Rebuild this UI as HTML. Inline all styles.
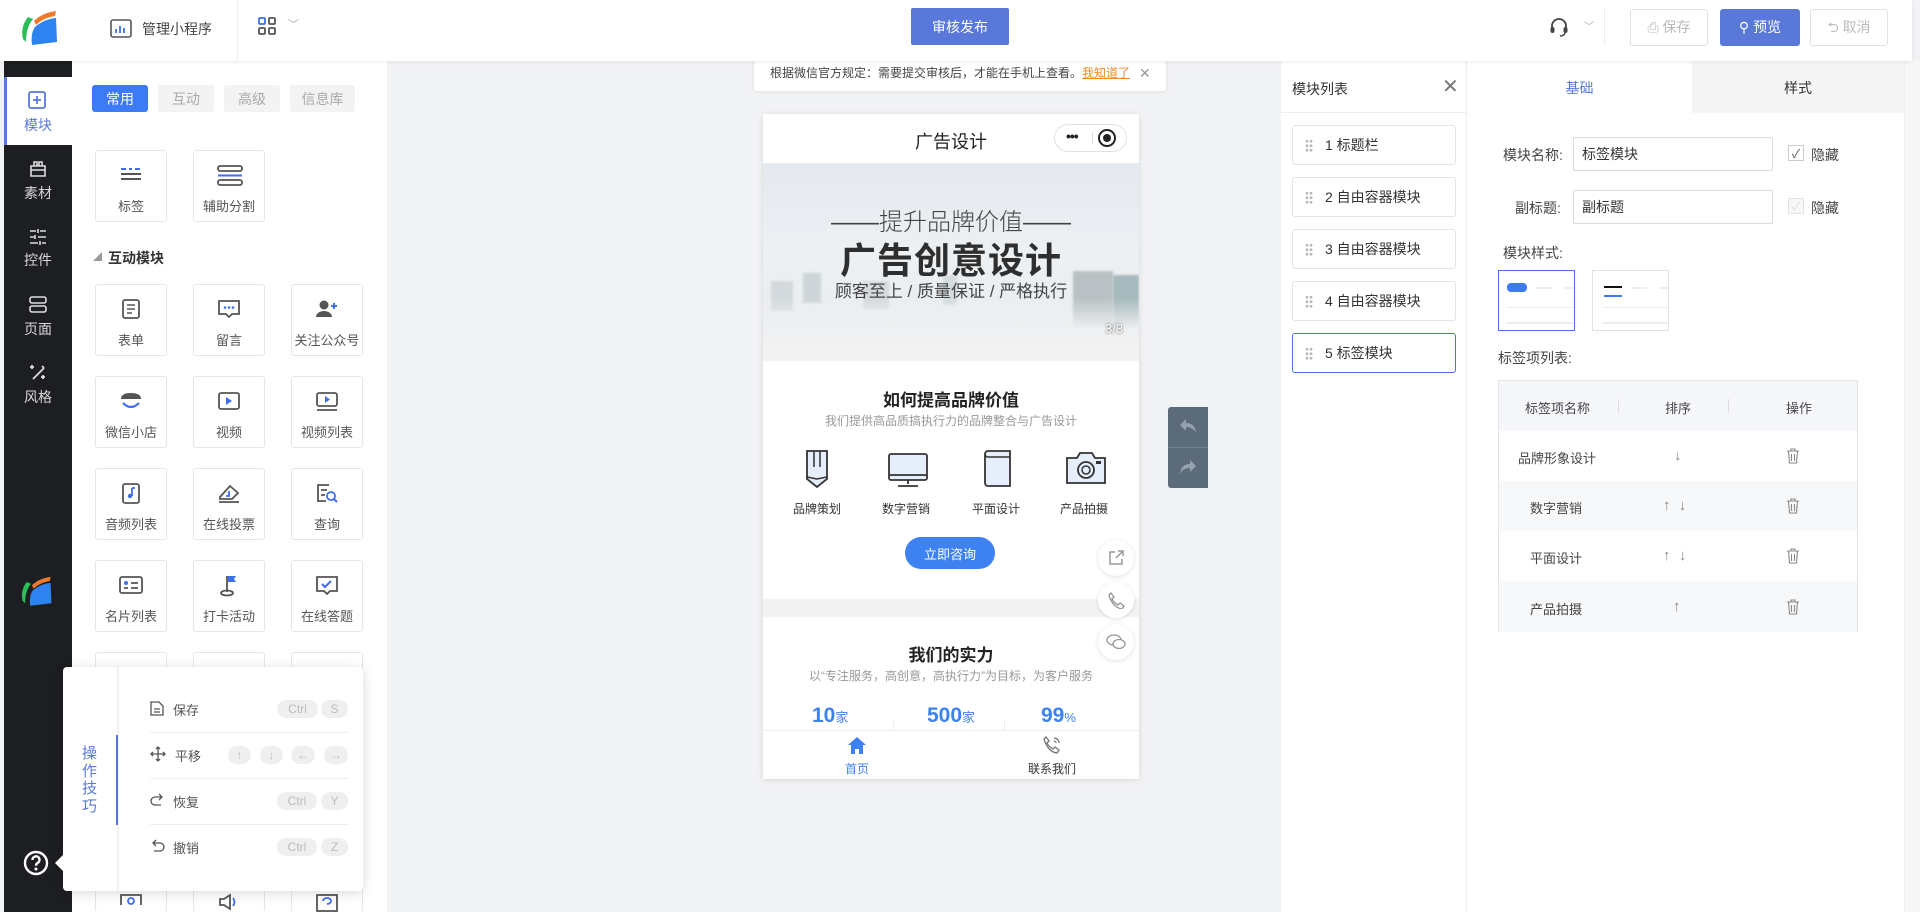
<!DOCTYPE html>
<html style="width:1920px;height:912px;overflow:hidden"><head><meta charset="utf-8"><style>
*{margin:0;padding:0;box-sizing:border-box}
body{width:1920px;height:912px;overflow:hidden;background:#f2f3f5;font-family:"Liberation Sans","Noto Sans CJK SC",sans-serif;color:#333;position:relative;font-size:14px}
.a{position:absolute}
.c{display:flex;align-items:center;justify-content:center}
.card{position:absolute;width:72px;height:72px;border:1px solid #e6e6e6;border-radius:3px;background:#fff;text-align:center;font-size:13px;color:#555;overflow:hidden}
.card svg{position:absolute;left:23px;top:14px}
.card span{position:absolute;left:0;right:0;top:45px;white-space:nowrap}
.sb{position:absolute;left:4px;width:68px;text-align:center;color:#d8d8d8;font-size:14px}
.mi{position:absolute;left:1292px;width:164px;height:40px;border:1px solid #e4e4e4;border-radius:3px;background:#fff;font-size:14px;color:#333;line-height:38px;padding-left:32px}
.mi i{position:absolute;left:12px;top:13px;width:8px;height:13px;background:radial-gradient(circle,#bbb 1.3px,transparent 1.6px) 0 0/4px 4.5px}
.chip{position:absolute;height:18px;border-radius:9px;background:#efefef;color:#bbb;font-size:12px;line-height:18px;text-align:center}
.row{position:absolute;left:150px;width:198px;font-size:13px;color:#555}
.btn{position:absolute;top:9px;height:37px;border:1px solid #e2e2e2;border-radius:3px;font-size:14px;color:#bbb;line-height:35px;text-align:center;background:#fff}
</style></head><body>

<!-- top bar -->
<div class="a" style="left:0;top:0;width:1912px;height:61px;background:#fff;box-shadow:0 1px 4px rgba(0,0,0,.08);z-index:5">
 <svg class="a" style="left:20px;top:9px" width="40" height="36" viewBox="0 0 40 36"><path d="M8 8 C3 14 1 22 3 30 L6 33 C6 24 8 16 13 10Z" fill="#2bbd5a"/><path d="M14 12 C20 6 28 3 36 2 L35 7 C28 8 21 11 16 16Z" fill="#f07a2c"/><path d="M15 18 C22 12 28 10 36 9 L37 33 L12 36 C11 28 12 22 15 18Z" fill="#2d84f0"/></svg>
 <svg class="a" style="left:110px;top:19px" width="22" height="19" viewBox="0 0 22 19"><rect x="1" y="1" width="20" height="17" rx="2" fill="none" stroke="#555" stroke-width="1.6"/><path d="M6 14V10M10 14V7M14 14V9" stroke="#3d6ef0" stroke-width="1.8"/></svg>
 <div class="a" style="left:142px;top:19px;font-size:14px;color:#444">管理小程序</div>
 <div class="a" style="left:237px;top:0;width:1px;height:61px;background:#eee"></div>
 <svg class="a" style="left:258px;top:17px" width="18" height="18" viewBox="0 0 18 18"><rect x="1" y="1" width="6" height="6" rx="1" fill="none" stroke="#3d6ef0" stroke-width="1.8"/><rect x="11" y="1" width="6" height="6" rx="1" fill="none" stroke="#555" stroke-width="1.8"/><rect x="1" y="11" width="6" height="6" rx="1" fill="none" stroke="#555" stroke-width="1.8"/><rect x="11" y="11" width="6" height="6" rx="1" fill="none" stroke="#555" stroke-width="1.8"/></svg>
 <div class="a" style="left:288px;top:16px;color:#aaa;font-size:11px">﹀</div>
 <div class="a c" style="left:911px;top:8px;width:98px;height:37px;background:#5a78d8;color:#fff;font-size:14px;border-radius:2px">审核发布</div>
 <svg class="a" style="left:1549px;top:17px" width="20" height="20" viewBox="0 0 20 20"><path d="M3 12V9a7 7 0 0 1 14 0v3" fill="none" stroke="#444" stroke-width="1.8"/><rect x="1.5" y="10" width="4" height="6" rx="2" fill="#444"/><rect x="14.5" y="10" width="4" height="6" rx="2" fill="#444"/><path d="M16 16q-1 3-5 3" fill="none" stroke="#444" stroke-width="1.5"/></svg>
 <div class="a" style="left:1584px;top:18px;color:#aaa;font-size:10px">﹀</div>
 <div class="a" style="left:1604px;top:8px;width:1px;height:37px;background:#eee"></div>
 <div class="btn" style="left:1630px;width:78px">⎙ 保存</div>
 <div class="btn" style="left:1720px;width:80px;background:#5a78d8;border-color:#5a78d8;color:#fff">⚲ 预览</div>
 <div class="btn" style="left:1810px;width:78px">⮌ 取消</div>
</div>
<div class="a" style="left:1904px;top:61px;width:16px;height:851px;background:#f7f7f7;border-left:1px solid #eee"></div>

<!-- sidebar -->
<div class="a" style="left:4px;top:61px;width:68px;height:851px;background:#1d1e22"></div>
<div class="a" style="left:4px;top:77px;width:68px;height:68px;background:#fff;border-left:3px solid #5a78d8"></div>
<svg class="a" style="left:28px;top:91px" width="18" height="18" viewBox="0 0 18 18"><rect x="1" y="1" width="16" height="16" rx="2" fill="none" stroke="#5a78d8" stroke-width="1.8"/><path d="M9 5v8M5 9h8" stroke="#5a78d8" stroke-width="1.8"/></svg>
<div class="sb" style="top:115px;color:#5a78d8">模块</div>
<svg class="a" style="left:29px;top:160px" width="18" height="17" viewBox="0 0 18 17"><path d="M2 6h14v10H2zM2 10h14M5 6V2h3v4M10 6V2h3v4" fill="none" stroke="#ddd" stroke-width="1.6"/></svg>
<div class="sb" style="top:183px">素材</div>
<svg class="a" style="left:29px;top:228px" width="18" height="17" viewBox="0 0 18 17"><path d="M1 3h6M11 3h6M1 9h4M9 9h8M1 15h8M13 15h4M9 1v4M6 7v4M11 13v4" stroke="#ddd" stroke-width="1.6"/></svg>
<div class="sb" style="top:250px">控件</div>
<svg class="a" style="left:29px;top:296px" width="18" height="17" viewBox="0 0 18 17"><rect x="1" y="1" width="16" height="6" rx="2" fill="none" stroke="#ddd" stroke-width="1.6"/><rect x="1" y="10" width="16" height="6" rx="2" fill="none" stroke="#ddd" stroke-width="1.6"/></svg>
<div class="sb" style="top:319px">页面</div>
<svg class="a" style="left:29px;top:363px" width="18" height="18" viewBox="0 0 18 18"><path d="M4 16L15 5M13 3l2 2M3 2v4M1 4h4M14 12v4M12 14h4" stroke="#ddd" stroke-width="1.8"/></svg>
<div class="sb" style="top:387px">风格</div>
<svg class="a" style="left:20px;top:573px" width="34" height="35" viewBox="0 0 40 36"><path d="M8 8 C3 14 1 22 3 30 L6 33 C6 24 8 16 13 10Z" fill="#2bbd5a"/><path d="M14 12 C20 6 28 3 36 2 L35 7 C28 8 21 11 16 16Z" fill="#f07a2c"/><path d="M15 18 C22 12 28 10 36 9 L37 33 L12 36 C11 28 12 22 15 18Z" fill="#2d84f0"/></svg>
<svg class="a" style="left:23px;top:850px" width="26" height="26" viewBox="0 0 26 26"><circle cx="13" cy="13" r="11" fill="none" stroke="#fff" stroke-width="2.4"/><path d="M9.5 10a3.5 3.5 0 1 1 5 3c-1.2.7-1.5 1.3-1.5 2.8" fill="none" stroke="#fff" stroke-width="2.4"/><circle cx="13" cy="19" r="1.5" fill="#fff"/></svg>

<!-- left panel -->
<div class="a" style="left:72px;top:61px;width:315px;height:851px;background:#fff"></div>
<div class="a c" style="left:92px;top:85px;width:56px;height:27px;background:#3d7af5;color:#fff;border-radius:3px;font-size:14px">常用</div>
<div class="a c" style="left:158px;top:85px;width:56px;height:27px;background:#f3f3f3;color:#aaa;border-radius:3px;font-size:14px">互动</div>
<div class="a c" style="left:224px;top:85px;width:56px;height:27px;background:#f3f3f3;color:#aaa;border-radius:3px;font-size:14px">高级</div>
<div class="a c" style="left:290px;top:85px;width:65px;height:27px;background:#f3f3f3;color:#aaa;border-radius:3px;font-size:14px">信息库</div>

<div class="card" style="left:95px;top:150px"><svg width="24" height="20" viewBox="0 0 24 20"><path d="M2 4h5M10 4h3M16 4h5" stroke="#3d6ef0" stroke-width="2"/><path d="M2 9h20M2 14h20" stroke="#555" stroke-width="2"/></svg><span>标签</span></div>
<div class="card" style="left:193px;top:150px"><svg width="26" height="22" viewBox="0 0 26 22"><rect x="1" y="1" width="24" height="5" rx="2" fill="none" stroke="#555" stroke-width="1.8"/><rect x="1" y="15" width="24" height="5" rx="2" fill="none" stroke="#555" stroke-width="1.8"/><path d="M1 10.5h24" stroke="#3d6ef0" stroke-width="2"/></svg><span>辅助分割</span></div>

<div class="a" style="left:93px;top:250px;font-size:9px;color:#999">◢</div>
<div class="a" style="left:108px;top:248px;font-size:14px;font-weight:bold;color:#333">互动模块</div>

<div class="card" style="left:95px;top:284px"><svg width="24" height="22" viewBox="0 0 24 22"><rect x="4" y="1" width="16" height="18" rx="2" fill="none" stroke="#555" stroke-width="1.8"/><path d="M8 6h8M8 10h8M8 14h5" stroke="#555" stroke-width="1.6"/></svg><span>表单</span></div>
<div class="card" style="left:193px;top:284px"><svg width="24" height="22" viewBox="0 0 24 22"><path d="M2 2h20v13h-7l-3 3-3-3H2z" fill="none" stroke="#555" stroke-width="1.8"/><circle cx="8" cy="8.5" r="1.3" fill="#3d6ef0"/><circle cx="12" cy="8.5" r="1.3" fill="#3d6ef0"/><circle cx="16" cy="8.5" r="1.3" fill="#3d6ef0"/></svg><span>留言</span></div>
<div class="card" style="left:291px;top:284px"><svg width="24" height="22" viewBox="0 0 24 22"><circle cx="9" cy="6" r="4.5" fill="#555"/><path d="M1 18a8 6 0 0 1 16 0z" fill="#555"/><path d="M19 4v6M16 7h6" stroke="#3d6ef0" stroke-width="2"/></svg><span>关注公众号</span></div>

<div class="card" style="left:95px;top:376px"><svg width="24" height="22" viewBox="0 0 24 22"><path d="M2 8q0-6 10-6t10 6z" fill="#555"/><path d="M4 12q8 8 16 0" fill="none" stroke="#3d6ef0" stroke-width="2.2"/></svg><span>微信小店</span></div>
<div class="card" style="left:193px;top:376px"><svg width="24" height="22" viewBox="0 0 24 22"><rect x="2" y="2" width="20" height="16" rx="2" fill="none" stroke="#555" stroke-width="1.8"/><path d="M9 6v8l6-4z" fill="#3d6ef0"/></svg><span>视频</span></div>
<div class="card" style="left:291px;top:376px"><svg width="24" height="22" viewBox="0 0 24 22"><rect x="2" y="2" width="20" height="13" rx="2" fill="none" stroke="#555" stroke-width="1.8"/><path d="M10 5v7l5-3.5z" fill="#3d6ef0"/><path d="M2 19h20" stroke="#555" stroke-width="1.8"/></svg><span>视频列表</span></div>

<div class="card" style="left:95px;top:468px"><svg width="24" height="22" viewBox="0 0 24 22"><rect x="4" y="1" width="16" height="19" rx="2" fill="none" stroke="#555" stroke-width="1.8"/><path d="M13 5v8" stroke="#3d6ef0" stroke-width="1.8"/><circle cx="11" cy="13" r="2.2" fill="#3d6ef0"/><path d="M13 5h3" stroke="#3d6ef0" stroke-width="1.8"/></svg><span>音频列表</span></div>
<div class="card" style="left:193px;top:468px"><svg width="24" height="22" viewBox="0 0 24 22"><path d="M3 14L13 3l8 7-6 6H3z" fill="none" stroke="#555" stroke-width="1.8"/><path d="M2 19h20" stroke="#555" stroke-width="1.8"/><path d="M12 8v5h-3" fill="none" stroke="#3d6ef0" stroke-width="1.8"/></svg><span>在线投票</span></div>
<div class="card" style="left:291px;top:468px"><svg width="24" height="22" viewBox="0 0 24 22"><path d="M14 2H3v16h8M6 7h6M6 12h4" fill="none" stroke="#555" stroke-width="1.8"/><circle cx="16" cy="13" r="4" fill="none" stroke="#3d6ef0" stroke-width="1.8"/><path d="M19 16l3 3" stroke="#3d6ef0" stroke-width="2"/></svg><span>查询</span></div>

<div class="card" style="left:95px;top:560px"><svg width="24" height="22" viewBox="0 0 24 22"><rect x="1" y="2" width="22" height="16" rx="2" fill="none" stroke="#555" stroke-width="1.8"/><circle cx="7" cy="8" r="2" fill="#3d6ef0"/><path d="M5 13h4M12 8h7M12 13h7" stroke="#555" stroke-width="1.8"/></svg><span>名片列表</span></div>
<div class="card" style="left:193px;top:560px"><svg width="24" height="22" viewBox="0 0 24 22"><path d="M10 1v16" stroke="#555" stroke-width="1.8"/><path d="M11 1h8l-2 3 2 3h-8z" fill="#3d6ef0"/><ellipse cx="10" cy="18" rx="6" ry="2.5" fill="none" stroke="#555" stroke-width="1.8"/></svg><span>打卡活动</span></div>
<div class="card" style="left:291px;top:560px"><svg width="24" height="22" viewBox="0 0 24 22"><path d="M2 2h20v14h-7l-3 3-3-3H2z" fill="none" stroke="#555" stroke-width="1.8"/><path d="M7 9l3 3 6-6" fill="none" stroke="#3d6ef0" stroke-width="2"/></svg><span>在线答题</span></div>

<div class="card" style="left:95px;top:652px"></div>
<div class="card" style="left:193px;top:652px"></div>
<div class="card" style="left:291px;top:652px"></div>
<div class="card" style="left:95px;top:885px;height:27px;border-bottom:0"><svg width="24" height="22" viewBox="0 0 24 22" style="top:7px"><path d="M2 12V2h20v10" fill="none" stroke="#555" stroke-width="1.8"/><circle cx="12" cy="8" r="3" fill="none" stroke="#3d6ef0" stroke-width="1.8"/></svg></div>
<div class="card" style="left:193px;top:885px;height:27px;border-bottom:0"><svg width="24" height="22" viewBox="0 0 24 22" style="top:7px"><path d="M3 6h4l6-4v14l-6-4H3z" fill="none" stroke="#555" stroke-width="1.8"/><path d="M16 5q3 4 0 8" fill="none" stroke="#3d6ef0" stroke-width="1.8"/></svg></div>
<div class="card" style="left:291px;top:885px;height:27px;border-bottom:0"><svg width="24" height="22" viewBox="0 0 24 22" style="top:7px"><rect x="2" y="2" width="20" height="16" fill="none" stroke="#555" stroke-width="1.8"/><path d="M8 8a4 3 0 1 1 4 3" fill="none" stroke="#3d6ef0" stroke-width="1.8"/></svg></div>

<!-- tips popup -->
<div class="a" style="left:63px;top:667px;width:300px;height:224px;background:#fff;border-radius:4px;box-shadow:0 2px 12px rgba(0,0,0,.15)"></div>
<div class="a" style="left:55px;top:855px;width:0;height:0;border:8px solid transparent;border-right-color:#fff;border-left:0"></div>
<div class="a" style="left:117px;top:667px;width:2px;height:224px;background:#f2f2f2"></div>
<div class="a" style="left:116px;top:735px;width:2px;height:90px;background:#5a78d8"></div>
<div class="a" style="left:82px;top:745px;width:18px;font-size:15px;line-height:17.5px;color:#5a78d8">操作技巧</div>
<div class="row" style="top:700px"><svg class="a" style="left:0;top:1px" width="14" height="15" viewBox="0 0 14 15"><path d="M1 1h8l4 4v9H1zM4 8h6M4 11h6" fill="none" stroke="#555" stroke-width="1.3"/></svg><span class="a" style="left:23px">保存</span><div class="chip" style="left:127px;width:41px">Ctrl</div><div class="chip" style="left:171px;width:27px">S</div></div>
<div class="a" style="left:150px;top:732px;width:198px;height:1px;background:#eee"></div>
<div class="row" style="top:746px"><svg class="a" style="left:0;top:0" width="16" height="16" viewBox="0 0 16 16"><path d="M8 1v14M1 8h14M6 3l2-2 2 2M6 13l2 2 2-2M3 6L1 8l2 2M13 6l2 2-2 2" fill="none" stroke="#555" stroke-width="1.3"/></svg><span class="a" style="left:25px">平移</span><div class="chip" style="left:78px;width:23px">↑</div><div class="chip" style="left:110px;width:23px">↓</div><div class="chip" style="left:141px;width:24px">←</div><div class="chip" style="left:174px;width:24px">→</div></div>
<div class="a" style="left:150px;top:778px;width:198px;height:1px;background:#eee"></div>
<div class="row" style="top:792px"><svg class="a" style="left:0;top:1px" width="15" height="14" viewBox="0 0 15 14"><path d="M11 4H5a4 4 0 0 0 0 8h6M9 1l3 3-3 3" fill="none" stroke="#555" stroke-width="1.3"/></svg><span class="a" style="left:23px">恢复</span><div class="chip" style="left:127px;width:40px">Ctrl</div><div class="chip" style="left:171px;width:27px">Y</div></div>
<div class="a" style="left:150px;top:824px;width:198px;height:1px;background:#eee"></div>
<div class="row" style="top:838px"><svg class="a" style="left:0;top:1px" width="15" height="14" viewBox="0 0 15 14"><path d="M4 4h6a4 4 0 0 1 0 8H4M6 1L3 4l3 3" fill="none" stroke="#555" stroke-width="1.3"/></svg><span class="a" style="left:23px">撤销</span><div class="chip" style="left:127px;width:40px">Ctrl</div><div class="chip" style="left:171px;width:27px">Z</div></div>

<!-- notice -->
<div class="a" style="left:754px;top:56px;width:412px;height:35px;background:#fff;border-radius:3px;box-shadow:0 1px 4px rgba(0,0,0,.08);font-size:12px;color:#444;line-height:35px;padding-left:16px">根据微信官方规定：需要提交审核后，才能在手机上查看。<span style="color:#f08a24;text-decoration:underline">我知道了</span><span class="a" style="left:385px;color:#999;font-size:14px">✕</span></div>

<!-- phone -->
<div class="a" style="left:763px;top:114px;width:376px;height:665px;background:#fff;box-shadow:0 1px 6px rgba(0,0,0,.12);overflow:hidden">
 <div class="a" style="left:0;top:14px;width:376px;text-align:center;font-size:18px;color:#222">广告设计</div>
 <div class="a" style="left:291px;top:10px;width:73px;height:28px;border:1px solid #e2e2e2;border-radius:14px"></div>
 <div class="a" style="left:303px;top:14px;font-size:14px;color:#222;letter-spacing:-1px;font-weight:bold">•••</div>
 <div class="a" style="left:329px;top:18px;width:1px;height:12px;background:#ddd"></div>
 <div class="a" style="left:335px;top:15px;width:18px;height:18px;border:2px solid #222;border-radius:50%"><div class="a" style="left:3px;top:3px;width:8px;height:8px;border-radius:50%;background:#222"></div></div>
 <div class="a" style="left:0;top:49px;width:376px;height:180px;background:linear-gradient(180deg,#e4e9ef 0%,#edf0f3 50%,#e9ecee 100%);overflow:hidden">
  <div class="a" style="left:8px;top:118px;width:22px;height:30px;background:#d3d9dc;filter:blur(1px)"></div>
  <div class="a" style="left:40px;top:110px;width:18px;height:30px;background:#cdd5d8;filter:blur(1px)"></div>
  <div class="a" style="left:100px;top:118px;width:26px;height:28px;background:#d5dadc;filter:blur(1px)"></div>
  <div class="a" style="left:180px;top:112px;width:14px;height:30px;background:#d5dcdf;filter:blur(1px)"></div>
  <div class="a" style="left:310px;top:108px;width:40px;height:60px;background:#b9c1c4;filter:blur(1px)"></div>
  <div class="a" style="left:350px;top:112px;width:26px;height:60px;background:#a6b9bd;filter:blur(1px)"></div>
  <div class="a" style="left:0;top:135px;width:376px;height:45px;background:linear-gradient(180deg,rgba(240,242,243,0),#eef0f1 70%)"></div>
 </div>
 <div class="a" style="left:0;top:229px;width:376px;height:18px;background:#f3f3f3"></div>
 <div class="a" style="left:0;top:88px;width:376px;text-align:center;font-size:24px;color:#444;font-weight:300">——提升品牌价值——</div>
 <div class="a" style="left:0;top:118px;width:376px;text-align:center;font-size:36px;color:#2e2e2e;font-weight:bold;letter-spacing:1px">广告创意设计</div>
 <div class="a" style="left:0;top:163px;width:376px;text-align:center;font-size:17px;color:#444">顾客至上 / 质量保证 / 严格执行</div>
 <div class="a" style="left:342px;top:207px;font-size:13px;color:#fff;text-shadow:0 0 2px #444">3/3</div>
 <div class="a" style="left:0;top:272px;width:376px;text-align:center;font-size:17px;font-weight:bold;color:#222">如何提高品牌价值</div>
 <div class="a" style="left:0;top:298px;width:376px;text-align:center;font-size:12px;color:#999">我们提供高品质搞执行力的品牌整合与广告设计</div>
 <svg class="a" style="left:40px;top:335px" width="30" height="40" viewBox="0 0 30 40"><path d="M4 2h20v28l-10 8-10-8z" fill="#e6edfb" stroke="#333" stroke-width="1.8"/><path d="M11 2v16M17 2v16M4 28l10 2 10-2" fill="none" stroke="#333" stroke-width="1.5"/></svg>
 <svg class="a" style="left:124px;top:338px" width="42" height="36" viewBox="0 0 42 36"><rect x="2" y="2" width="38" height="26" rx="2" fill="#e6edfb" stroke="#333" stroke-width="1.8"/><path d="M2 23h38M21 28v4M11 34h20" stroke="#333" stroke-width="1.8"/></svg>
 <svg class="a" style="left:218px;top:334px" width="32" height="40" viewBox="0 0 32 40"><path d="M4 6a3 3 0 0 1 3-3h22v35H7a3 3 0 0 1-3-3z" fill="#e6edfb" stroke="#333" stroke-width="1.8"/><path d="M4 6a3 3 0 0 0 3 3h22" fill="none" stroke="#333" stroke-width="1.5"/></svg>
 <svg class="a" style="left:302px;top:336px" width="42" height="36" viewBox="0 0 42 36"><path d="M2 8h10l3-5h12l3 5h10v25H2z" fill="#e6edfb" stroke="#333" stroke-width="1.8"/><circle cx="21" cy="20" r="8" fill="none" stroke="#333" stroke-width="1.8"/><circle cx="21" cy="20" r="4" fill="none" stroke="#333" stroke-width="1.5"/><rect x="31" y="11" width="5" height="3" fill="#333"/></svg>
 <div class="a" style="left:14px;top:386px;width:80px;text-align:center;font-size:12px;color:#333">品牌策划</div>
 <div class="a" style="left:103px;top:386px;width:80px;text-align:center;font-size:12px;color:#333">数字营销</div>
 <div class="a" style="left:193px;top:386px;width:80px;text-align:center;font-size:12px;color:#333">平面设计</div>
 <div class="a" style="left:281px;top:386px;width:80px;text-align:center;font-size:12px;color:#333">产品拍摄</div>
 <div class="a c" style="left:142px;top:423px;width:90px;height:32px;border-radius:16px;background:#3d82f0;color:#fff;font-size:13px">立即咨询</div>
 <div class="a" style="left:0;top:485px;width:376px;height:18px;background:#f3f3f3"></div>
 <div class="a" style="left:0;top:527px;width:376px;text-align:center;font-size:17px;font-weight:bold;color:#222">我们的实力</div>
 <div class="a" style="left:0;top:553px;width:376px;text-align:center;font-size:12px;color:#999">以“专注服务，高创意，高执行力”为目标，为客户服务</div>
 <div class="a" style="left:49px;top:590px;color:#3d82f0;font-size:21px;font-weight:bold">10<span style="font-size:13px;font-weight:normal">家</span></div>
 <div class="a" style="left:164px;top:590px;color:#3d82f0;font-size:21px;font-weight:bold">500<span style="font-size:13px;font-weight:normal">家</span></div>
 <div class="a" style="left:278px;top:590px;color:#3d82f0;font-size:21px;font-weight:bold">99<span style="font-size:13px;font-weight:normal">%</span></div>
 <div class="a" style="left:130px;top:605px;width:1px;height:12px;background:#eee"></div>
 <div class="a" style="left:241px;top:605px;width:1px;height:12px;background:#eee"></div>
 <div class="a" style="left:0;top:616px;width:376px;height:49px;background:#fff;border-top:1px solid #eee"></div>
 <svg class="a" style="left:84px;top:622px" width="20" height="19" viewBox="0 0 20 19"><path d="M10 1L1 9h3v9h4v-5h4v5h4V9h3z" fill="#3d82f0"/></svg>
 <div class="a" style="left:74px;top:646px;width:40px;text-align:center;font-size:12px;color:#3d82f0">首页</div>
 <svg class="a" style="left:279px;top:621px" width="20" height="20" viewBox="0 0 20 20"><path d="M4 2l3 4-2 2q2 4 6 6l2-2 4 3-2 3Q6 17 2 4z" fill="none" stroke="#777" stroke-width="1.3"/><path d="M12 3a5 5 0 0 1 5 5M12 6a2 2 0 0 1 2 2" fill="none" stroke="#777" stroke-width="1.3"/></svg>
 <div class="a" style="left:259px;top:646px;width:60px;text-align:center;font-size:12px;color:#333">联系我们</div>
</div>
<div class="a c" style="left:1098px;top:540px;width:36px;height:36px;border-radius:50%;background:#fff;box-shadow:0 1px 5px rgba(0,0,0,.12)"><svg width="18" height="18" viewBox="0 0 18 18"><path d="M8 3H3v12h12v-5M11 2h5v5M16 2l-7 7" fill="none" stroke="#999" stroke-width="1.5"/></svg></div>
<div class="a c" style="left:1098px;top:582px;width:36px;height:36px;border-radius:50%;background:#fff;box-shadow:0 1px 5px rgba(0,0,0,.12)"><svg width="18" height="18" viewBox="0 0 18 18"><path d="M4 2l3 4-2 2q2 4 6 6l2-2 4 3-2 3Q5 16 2 4z" fill="none" stroke="#999" stroke-width="1.4"/></svg></div>
<div class="a c" style="left:1098px;top:624px;width:36px;height:36px;border-radius:50%;background:#fff;box-shadow:0 1px 5px rgba(0,0,0,.12)"><svg width="20" height="16" viewBox="0 0 20 16"><ellipse cx="8" cy="6" rx="7" ry="5" fill="#fff" stroke="#999" stroke-width="1.3"/><ellipse cx="13" cy="10" rx="6" ry="4.5" fill="#fff" stroke="#999" stroke-width="1.3"/></svg></div>
<div class="a" style="left:1168px;top:407px;width:40px;height:81px;background:#5b6b7a;border-radius:3px 0 0 3px"></div>
<div class="a" style="left:1168px;top:447px;width:40px;height:1px;background:#728190"></div>
<svg class="a" style="left:1178px;top:418px" width="20" height="16" viewBox="0 0 20 16"><path d="M8 1L2 7l6 6V9q7 0 10 6-1-10-10-10z" fill="#94a2ae"/></svg>
<svg class="a" style="left:1178px;top:459px" width="20" height="16" viewBox="0 0 20 16"><path d="M12 1l6 6-6 6V9q-7 0-10 6 1-10 10-10z" fill="#94a2ae"/></svg>

<!-- module list -->
<div class="a" style="left:1281px;top:61px;width:186px;height:851px;background:#fff;border-right:1px solid #eee"></div>
<div class="a" style="left:1292px;top:79px;font-size:14px;color:#333">模块列表</div>
<div class="a" style="left:1442px;top:74px;font-size:20px;color:#777">✕</div>
<div class="a" style="left:1281px;top:112px;width:186px;height:1px;background:#eee"></div>
<div class="mi" style="top:125px"><i></i>1 标题栏</div>
<div class="mi" style="top:177px"><i></i>2 自由容器模块</div>
<div class="mi" style="top:229px"><i></i>3 自由容器模块</div>
<div class="mi" style="top:281px"><i></i>4 自由容器模块</div>
<div class="mi" style="top:333px;border-color:#4a74e0"><i></i>5 标签模块</div>

<!-- right panel -->
<div class="a" style="left:1467px;top:61px;width:437px;height:851px;background:#fff"></div>
<div class="a" style="left:1692px;top:61px;width:212px;height:52px;background:#f5f5f5"></div>
<div class="a" style="left:1467px;top:78px;width:225px;text-align:center;font-size:14px;color:#5a78d8">基础</div>
<div class="a" style="left:1692px;top:78px;width:212px;text-align:center;font-size:14px;color:#333">样式</div>
<div class="a" style="left:1503px;top:145px;font-size:14px;color:#444">模块名称:</div>
<div class="a" style="left:1573px;top:137px;width:200px;height:34px;border:1px solid #dcdcdc;border-radius:2px;font-size:14px;line-height:32px;padding-left:8px;color:#333">标签模块</div>
<div class="a c" style="left:1788px;top:145px;width:16px;height:16px;border:1px solid #ccc;color:#555;font-size:12px">✓</div>
<div class="a" style="left:1811px;top:145px;font-size:14px;color:#444">隐藏</div>
<div class="a" style="left:1515px;top:198px;font-size:14px;color:#444">副标题:</div>
<div class="a" style="left:1573px;top:190px;width:200px;height:34px;border:1px solid #dcdcdc;border-radius:2px;font-size:14px;line-height:32px;padding-left:8px;color:#333">副标题</div>
<div class="a c" style="left:1788px;top:198px;width:16px;height:16px;border:1px solid #e2e2e2;color:#ddd;font-size:12px;background:#f7f7f7">✓</div>
<div class="a" style="left:1811px;top:198px;font-size:14px;color:#444">隐藏</div>
<div class="a" style="left:1503px;top:243px;font-size:14px;color:#444">模块样式:</div>
<div class="a" style="left:1498px;top:270px;width:77px;height:61px;border:1px solid #4a74e0;overflow:hidden">
 <div class="a" style="left:8px;top:12px;width:20px;height:9px;border-radius:4px;background:#3d7af5"></div>
 <div class="a" style="left:37px;top:16px;width:16px;height:2px;background:#eee"></div><div class="a" style="left:66px;top:16px;width:10px;height:2px;background:#eee"></div>
 <div class="a" style="left:8px;top:36px;width:68px;height:1px;background:#eee"></div><div class="a" style="left:8px;top:51px;width:68px;height:2px;background:#eee"></div>
</div>
<div class="a" style="left:1592px;top:270px;width:77px;height:61px;border:1px solid #e2e2e2;overflow:hidden">
 <div class="a" style="left:11px;top:15px;width:18px;height:2px;background:#111"></div><div class="a" style="left:11px;top:24px;width:18px;height:2px;background:#3d7af5"></div>
 <div class="a" style="left:38px;top:16px;width:16px;height:2px;background:#eee"></div><div class="a" style="left:66px;top:16px;width:10px;height:2px;background:#eee"></div>
 <div class="a" style="left:9px;top:36px;width:68px;height:1px;background:#eee"></div><div class="a" style="left:9px;top:51px;width:68px;height:2px;background:#eee"></div>
</div>
<div class="a" style="left:1498px;top:348px;font-size:14px;color:#444">标签项列表:</div>
<div class="a" style="left:1498px;top:380px;width:360px;height:252px;border:1px solid #e4e4e4;font-size:13px;color:#444">
 <div class="a" style="left:0;top:0;width:358px;height:50px;background:#f5f7fa"></div>
 <div class="a" style="left:26px;top:17px">标签项名称</div>
 <div class="a" style="left:119px;top:18px;width:1px;height:14px;background:#ddd"></div>
 <div class="a" style="left:166px;top:17px">排序</div>
 <div class="a" style="left:229px;top:18px;width:1px;height:14px;background:#ddd"></div>
 <div class="a" style="left:287px;top:17px">操作</div>
 <div class="a" style="left:0;top:100px;width:358px;height:50px;background:#f7f8fa"></div>
 <div class="a" style="left:0;top:200px;width:358px;height:51px;background:#f7f8fa"></div>
 <div class="a" style="left:19px;top:67px">品牌形象设计</div><div class="a" style="left:175px;top:66px;color:#888;font-size:15px">↓</div>
 <div class="a" style="left:31px;top:117px">数字营销</div><div class="a" style="left:164px;top:116px;color:#888;font-size:15px">↑&nbsp;&nbsp;↓</div>
 <div class="a" style="left:31px;top:167px">平面设计</div><div class="a" style="left:164px;top:166px;color:#888;font-size:15px">↑&nbsp;&nbsp;↓</div>
 <div class="a" style="left:31px;top:218px">产品拍摄</div><div class="a" style="left:174px;top:217px;color:#888;font-size:15px">↑</div>
 <svg class="a" style="left:287px;top:67px" width="14" height="16" viewBox="0 0 14 16"><path d="M1 3h12M5 3V1h4v2M2.5 3l1 12h7l1-12M5.5 6v7M8.5 6v7" fill="none" stroke="#888" stroke-width="1.1"/></svg>
 <svg class="a" style="left:287px;top:117px" width="14" height="16" viewBox="0 0 14 16"><path d="M1 3h12M5 3V1h4v2M2.5 3l1 12h7l1-12M5.5 6v7M8.5 6v7" fill="none" stroke="#888" stroke-width="1.1"/></svg>
 <svg class="a" style="left:287px;top:167px" width="14" height="16" viewBox="0 0 14 16"><path d="M1 3h12M5 3V1h4v2M2.5 3l1 12h7l1-12M5.5 6v7M8.5 6v7" fill="none" stroke="#888" stroke-width="1.1"/></svg>
 <svg class="a" style="left:287px;top:218px" width="14" height="16" viewBox="0 0 14 16"><path d="M1 3h12M5 3V1h4v2M2.5 3l1 12h7l1-12M5.5 6v7M8.5 6v7" fill="none" stroke="#888" stroke-width="1.1"/></svg>
</div>
</body></html>
